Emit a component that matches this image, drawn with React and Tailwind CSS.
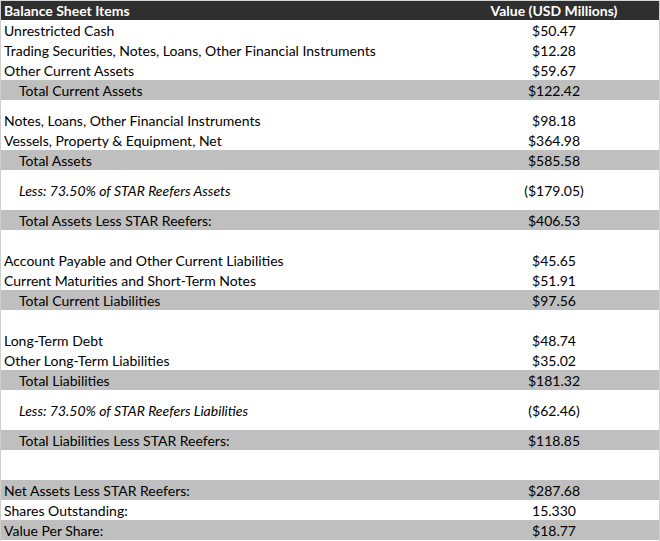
const rows = [
  { label: "Unrestricted Cash", value: "$50.47" },
  { label: "Trading Securities, Notes, Loans, Other Financial Instruments", value: "$12.28" },
  { label: "Other Current Assets", value: "$59.67" },
  { label: "Total Current Assets", value: "$122.42", kind: "total" },
  { kind: "blank", h: "h-[10px]" },
  { label: "Notes, Loans, Other Financial Instruments", value: "$98.18" },
  { label: "Vessels, Property & Equipment, Net", value: "$364.98" },
  { label: "Total Assets", value: "$585.58", kind: "total" },
  { label: "Less: 73.50% of STAR Reefers Assets", value: "($179.05)", kind: "less" },
  { label: "Total Assets Less STAR Reefers:", value: "$406.53", kind: "total" },
  { kind: "blank", h: "h-[20px]" },
  { label: "Account Payable and Other Current Liabilities", value: "$45.65" },
  { label: "Current Maturities and Short-Term Notes", value: "$51.91" },
  { label: "Total Current Liabilities", value: "$97.56", kind: "total" },
  { kind: "blank", h: "h-[20px]" },
  { label: "Long-Term Debt", value: "$48.74" },
  { label: "Other Long-Term Liabilities", value: "$35.02" },
  { label: "Total Liabilities", value: "$181.32", kind: "total" },
  { label: "Less: 73.50% of STAR Reefers Liabilities", value: "($62.46)", kind: "less" },
  { label: "Total Liabilities Less STAR Reefers:", value: "$118.85", kind: "total" },
  { kind: "blank", h: "h-[30px]" },
  { label: "Net Assets Less STAR Reefers:", value: "$287.68", kind: "summary" },
  { label: "Shares Outstanding:", value: "15.330" },
  { label: "Value Per Share:", value: "$18.77", kind: "summary" },
];

const Row = ({ label, value, kind, h }) => {
  if (kind === "blank") return <div className={h} />;

  const shaded = kind === "total" || kind === "summary";
  const indent = kind === "total" || kind === "less";

  return (
    <div
      className={`flex items-center ${kind === "less" ? "h-[40px]" : "h-[20px]"} ${
        shaded ? "bg-[#bfbfbf]" : ""
      }`}
    >
      <div
        className={`flex-1 whitespace-nowrap pt-px ${indent ? "pl-[18px]" : "pl-[3px]"} ${
          kind === "less" ? "italic" : ""
        }`}
      >
        {label}
      </div>
      <div className="w-[190px] pr-[20px] pt-px text-center">{value}</div>
    </div>
  );
};

export default function App() {
  return (
    <div
      className="w-[660px] h-[541px] bg-white border-x border-[#cfcfcf] text-[14px] leading-none text-black"
      style={{ fontFamily: "Lato, 'Open Sans', sans-serif" }}
    >
      {/* header */}
      <div className="flex items-center h-[20px] border-t border-[#d6d6d6] bg-[#2f2f2f] text-white font-bold">
        <div className="flex-1 pl-[3px] pt-px">Balance Sheet Items</div>
        <div className="w-[190px] pr-[20px] pt-px text-center">Value (USD Millions)</div>
      </div>

      {rows.map((r, i) => (
        <Row key={i} {...r} />
      ))}
    </div>
  );
}
